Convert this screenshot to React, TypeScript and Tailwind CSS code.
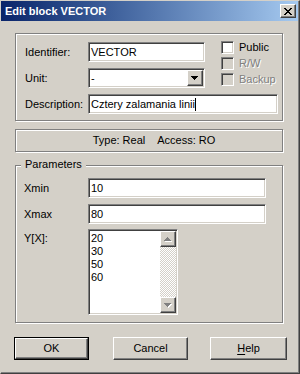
const sunken =
  "border border-t-[#808080] border-l-[#808080] border-b-white border-r-white shadow-[inset_1px_1px_0_#404040,inset_-1px_-1px_0_#d4d0c8]";
const raised =
  "border border-t-white border-l-white border-b-[#404040] border-r-[#404040] shadow-[inset_-1px_-1px_0_#808080]";
const etched = "border border-[#808080] shadow-[inset_1px_1px_0_#fff,1px_1px_0_#fff]";
const disabledText = "text-[#808080] [text-shadow:1px_1px_0_#fff]";

function CloseGlyph() {
  const cells = [
    [0, 0], [1, 0], [6, 0], [7, 0],
    [1, 1], [2, 1], [5, 1], [6, 1],
    [2, 2], [3, 2], [4, 2], [5, 2],
    [3, 3], [4, 3],
    [2, 4], [3, 4], [4, 4], [5, 4],
    [1, 5], [2, 5], [5, 5], [6, 5],
    [0, 6], [1, 6], [6, 6], [7, 6],
  ];
  return (
    <svg width="8" height="7" viewBox="0 0 8 7" shapeRendering="crispEdges">
      {cells.map(([x, y]) => (
        <rect key={`${x}-${y}`} x={x} y={y} width="1" height="1" fill="#000" />
      ))}
    </svg>
  );
}

// 7x4 pixel triangle, down or up
function Arrow({ up = false, disabled = false }: { up?: boolean; disabled?: boolean }) {
  const rows = [
    [0, 7],
    [1, 5],
    [2, 3],
    [3, 1],
  ];
  const shape = (fill: string, dx: number, dy: number) =>
    rows.map(([off, w], i) => (
      <rect
        key={`${fill}-${i}`}
        x={off + dx}
        y={(up ? 3 - i : i) + dy}
        width={w}
        height="1"
        fill={fill}
      />
    ));
  return (
    <svg width="8" height="5" viewBox="0 0 8 5" shapeRendering="crispEdges">
      {disabled && shape("#fff", 1, 1)}
      {shape(disabled ? "#808080" : "#000", 0, 0)}
    </svg>
  );
}

function TextBox({ value, width, caret = false }: { value: string; width: string; caret?: boolean }) {
  return (
    <div className={`${sunken} ${width} h-[20px] bg-white flex items-center pl-[2px] whitespace-nowrap overflow-hidden`}>
      <span>{value}</span>
      {caret && <span className="inline-block w-[1px] h-[13px] bg-black" />}
    </div>
  );
}

function CheckBox({ label, disabled = false }: { label: string; disabled?: boolean }) {
  return (
    <div className="flex items-center h-[13px] gap-[5px]">
      <div className={`${sunken} w-[13px] h-[13px] ${disabled ? "bg-[#d4d0c8]" : "bg-white"}`} />
      <span className={disabled ? disabledText : ""}>{label}</span>
    </div>
  );
}

function Field({ label, labelWidth, children }: { label: string; labelWidth: string; children: React.ReactNode }) {
  return (
    <div className="flex items-center h-[20px]">
      <span className={labelWidth}>{label}</span>
      {children}
    </div>
  );
}

export default function App() {
  return (
    <div className="w-[300px] h-[374px] flex flex-col bg-[#d4d0c8] border border-t-[#d4d0c8] border-l-[#d4d0c8] border-r-[#404040] border-b-[#404040] shadow-[inset_-1px_-1px_0_#808080] font-['Liberation_Sans',Arial,sans-serif] text-[11px] leading-[13px] text-black overflow-hidden">
      {/* title bar */}
      <div className="h-[20px] mr-[1px] flex items-center justify-between bg-linear-to-r from-[#0a246a] to-[#a6caf0] pl-[4px] pr-[2px]">
        <span className="text-white font-bold text-[11px]">Edit block VECTOR</span>
        <div className={`${raised} w-[16px] h-[14px] bg-[#d4d0c8] flex items-center justify-center`}>
          <CloseGlyph />
        </div>
      </div>

      {/* identity group */}
      <div className={`${etched} ml-[14px] mt-[12px] w-[268px] h-[88px] pt-[8px] pl-[9px]`}>
        <div className="flex">
          <div className="flex flex-col gap-[6px]">
            <Field label="Identifier:" labelWidth="w-[63px]">
              <TextBox value="VECTOR" width="w-[117px]" />
            </Field>
            <Field label="Unit:" labelWidth="w-[63px]">
              <div className={`${sunken} w-[117px] h-[20px] bg-white flex p-[1px]`}>
                <span className="flex-1 pl-[1px] self-center">-</span>
                <div className={`${raised} w-[16px] bg-[#d4d0c8] flex items-center justify-center`}>
                  <Arrow />
                </div>
              </div>
            </Field>
          </div>
          <div className="ml-[16px] -mt-[1px] flex flex-col gap-[3px]">
            <CheckBox label="Public" />
            <CheckBox label="R/W" disabled />
            <CheckBox label="Backup" disabled />
          </div>
        </div>
        <div className="mt-[6px]">
          <Field label="Description:" labelWidth="w-[63px]">
            <TextBox value="Cztery zalamania linii" width="w-[190px]" caret />
          </Field>
        </div>
      </div>

      {/* info bar */}
      <div className={`${etched} ml-[14px] mt-[8px] w-[268px] h-[23px] flex items-center justify-center gap-[12px] pl-[10px]`}>
        <span>Type: Real</span>
        <span>Access: RO</span>
      </div>

      {/* parameters group */}
      <div className={`${etched} relative ml-[14px] mt-[13px] w-[268px] h-[158px] pt-[12px] pl-[8px]`}>
        <span className="absolute left-[5px] -top-[8px] px-[4px] bg-[#d4d0c8]">Parameters</span>
        <div className="flex flex-col gap-[6px]">
          <Field label="Xmin" labelWidth="w-[64px]">
            <TextBox value="10" width="w-[178px]" />
          </Field>
          <Field label="Xmax" labelWidth="w-[64px]">
            <TextBox value="80" width="w-[178px]" />
          </Field>
        </div>
        <div className="flex mt-[5px]">
          <span className="w-[64px] pt-[3px]">Y[X]:</span>
          <div className={`${sunken} w-[90px] h-[86px] bg-white flex p-[1px]`}>
            <div className="flex-1 flex flex-col pt-[1px] pl-[1px]">
              <span>20</span>
              <span>30</span>
              <span>50</span>
              <span>60</span>
            </div>
            <div className="w-[16px] flex flex-col">
              <div className={`${raised} h-[16px] bg-[#d4d0c8] flex items-center justify-center`}>
                <Arrow up disabled />
              </div>
              <div className="flex-1 bg-[repeating-conic-gradient(#fff_0_25%,#d4d0c8_0_50%)] bg-[length:2px_2px]" />
              <div className={`${raised} h-[16px] bg-[#d4d0c8] flex items-center justify-center`}>
                <Arrow disabled />
              </div>
            </div>
          </div>
        </div>
      </div>

      {/* buttons */}
      <div className="flex mt-[14px] ml-[13px]">
        <div className="w-[75px] h-[23px] border border-black">
          <div className={`${raised} h-full bg-[#d4d0c8] flex items-center justify-center`}>OK</div>
        </div>
        <div className={`${raised} ml-[24px] w-[75px] h-[23px] bg-[#d4d0c8] flex items-center justify-center`}>
          Cancel
        </div>
        <div className={`${raised} ml-[22px] w-[77px] h-[23px] bg-[#d4d0c8] flex items-center justify-center`}>
          <span>
            <span className="underline underline-offset-[2px]">H</span>elp
          </span>
        </div>
      </div>
    </div>
  );
}
